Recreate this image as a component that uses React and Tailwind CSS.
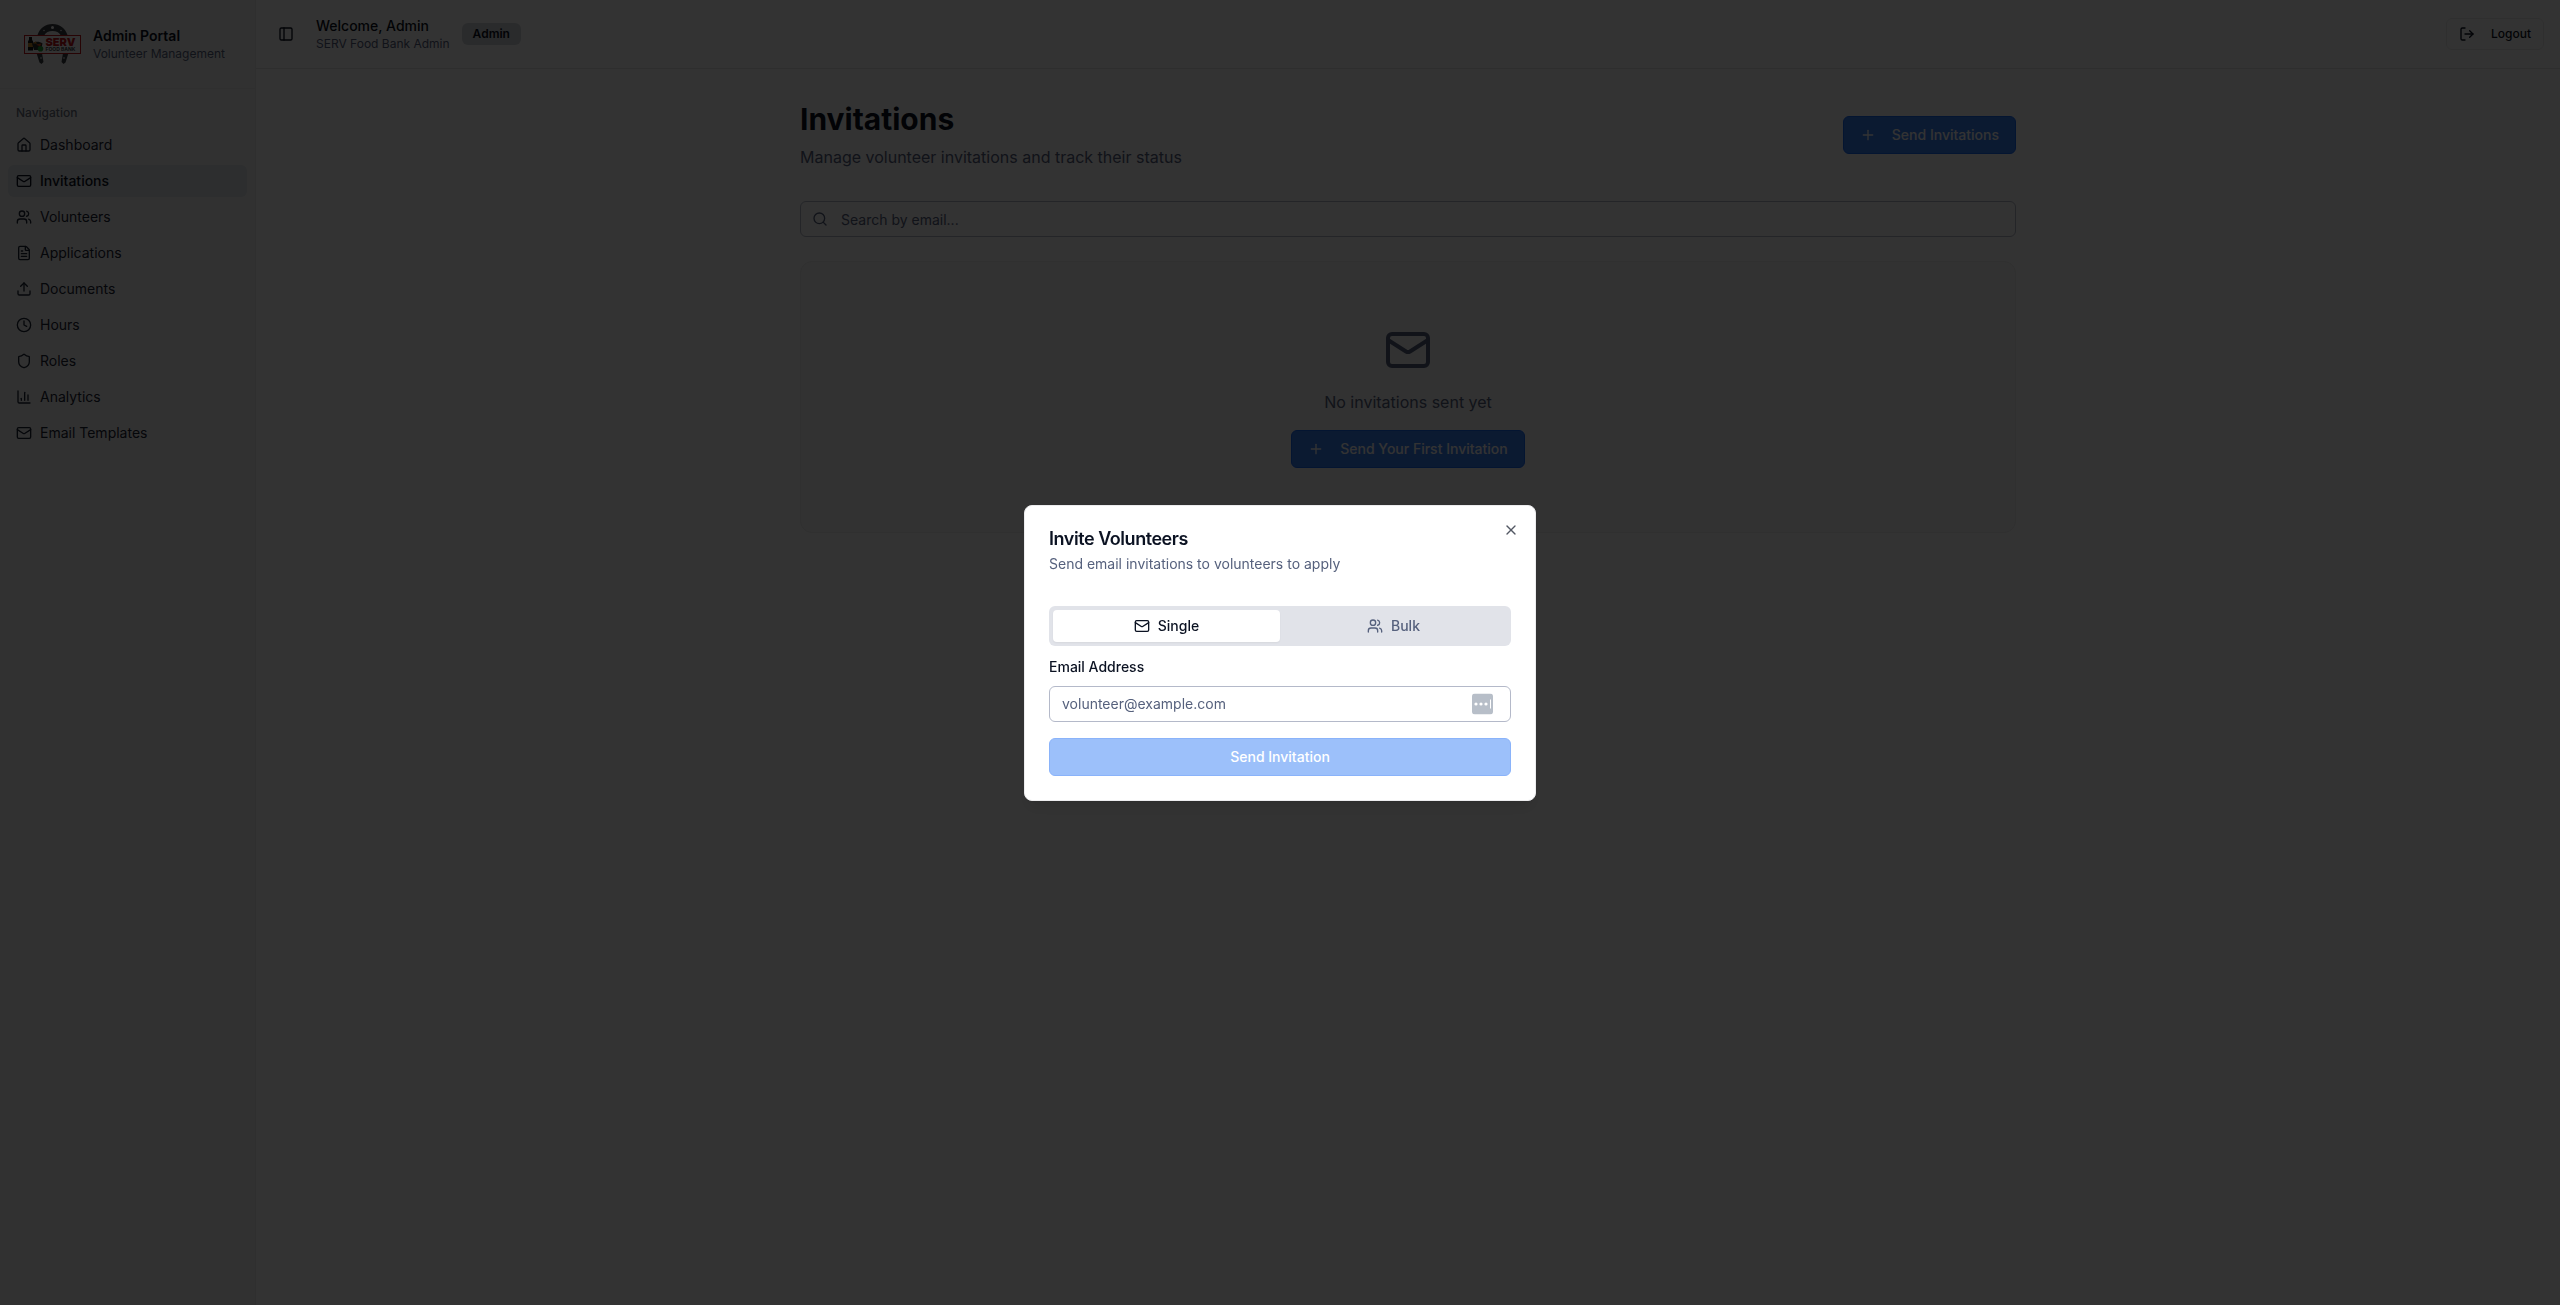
import React from "react";
import {
  BarChart3,
  Clock,
  FileText,
  Home,
  LogOut,
  Mail,
  PanelLeft,
  Plus,
  Search,
  Shield,
  Upload,
  Users,
  X,
} from "lucide-react";

const navItems = [
  { label: "Dashboard", icon: Home },
  { label: "Invitations", icon: Mail, active: true },
  { label: "Volunteers", icon: Users },
  { label: "Applications", icon: FileText },
  { label: "Documents", icon: Upload },
  { label: "Hours", icon: Clock },
  { label: "Roles", icon: Shield },
  { label: "Analytics", icon: BarChart3 },
  { label: "Email Templates", icon: Mail },
];

function Logo() {
  return (
    <svg className="h-10 w-[57px] shrink-0" viewBox="0 0 57 40" role="img" aria-label="SERV Food Bank">
      <path
        d="M13.5 11 C16 4 21 0 28.5 0 C36 0 41 4 43.5 11 L36.5 11 C35 8.5 32.5 7 28.5 7 C24.5 7 22 8.5 20.5 11 Z"
        fill="#3a3d42"
      />
      <path d="M12.5 29 L18 29 L19.5 38 L17.5 40 L15.5 38.5 Z" fill="#3a3d42" />
      <path d="M44.5 29 L39 29 L37.5 38 L39.5 40 L41.5 38.5 Z" fill="#3a3d42" />
      <g fill="#ffffff">
        <circle cx="28.5" cy="3.5" r="1.5" />
        <circle cx="20" cy="6.5" r="0.7" />
        <circle cx="37" cy="6.5" r="0.7" />
        <circle cx="17" cy="34" r="0.8" />
        <circle cx="40" cy="34" r="0.8" />
      </g>
      <rect x="0.5" y="11.5" width="56" height="18" fill="#fafafa" stroke="#c4161c" />
      <path d="M5 13 H8 V15.5 L9 17.5 V26.5 H4 V17.5 L5 15.5 Z" fill="#151515" />
      <rect x="4" y="19" width="5" height="4" fill="#c98a2b" />
      <path d="M8 19.5 C10 17 16 17 18.5 19.5 L17 26 H10 Z" fill="#2c2f2c" />
      <path d="M9 19.5 L11.5 17.5 L13 19.5 Z" fill="#e08a1e" />
      <path d="M12 20.5 L17.5 19.5 L16 22.5 Z" fill="#c9461e" />
      <circle cx="16.5" cy="24.8" r="2.8" fill="#1f9d35" />
      <text x="21.5" y="21.5" fill="#c4161c" fontFamily="Inter, sans-serif" fontWeight="900" fontSize="11">
        SERV
      </text>
      <text x="21.5" y="27" fill="#3a3d42" fontFamily="Inter, sans-serif" fontWeight="700" fontSize="5">
        FOOD BANK
      </text>
    </svg>
  );
}

function Sidebar() {
  return (
    <aside className="flex w-64 shrink-0 flex-col border-r border-[#ebebeb] bg-[#f6f6f6]">
      <div className="flex items-center gap-3 border-b border-[#ebebeb] p-6">
        <Logo />
        <div>
          <p className="text-sm font-semibold text-[#0b1222]">Admin Portal</p>
          <p className="text-xs text-[#56617d]">Volunteer Management</p>
        </div>
      </div>
      <nav className="p-2" aria-label="Navigation">
        <p className="flex h-8 items-center px-2 text-xs font-medium text-[#6a7080]">Navigation</p>
        <ul className="flex flex-col gap-1">
          {navItems.map(({ label, icon: Icon, active }) => (
            <li key={label}>
              <a
                href="#"
                aria-current={active ? "page" : undefined}
                className={
                  active
                    ? "flex h-8 items-center gap-2 rounded-md bg-[#dfe3e8] px-2 text-sm font-medium text-[#0b1222]"
                    : "flex h-8 items-center gap-2 rounded-md px-2 text-sm text-[#1b2333]"
                }
              >
                <Icon className="size-4 shrink-0" />
                {label}
              </a>
            </li>
          ))}
        </ul>
      </nav>
    </aside>
  );
}

function TopBar() {
  return (
    <header className="flex items-center justify-between border-b border-[#e4e4e4] p-4">
      <div className="flex items-center gap-4">
        <button type="button" aria-label="Toggle sidebar" className="flex size-7 items-center justify-center text-[#0b1222]">
          <PanelLeft className="size-4" />
        </button>
        <div className="flex items-center gap-3">
          <div>
            <p className="text-sm font-medium text-[#0b1222]">Welcome, Admin</p>
            <p className="text-xs text-[#56617d]">SERV Food Bank Admin</p>
          </div>
          <span className="rounded-md border border-transparent bg-[#d3d6db] px-2.5 py-0.5 text-xs font-semibold text-[#0b1222]">
            Admin
          </span>
        </div>
      </div>
      <button
        type="button"
        className="flex h-8 items-center gap-4 rounded-md border border-[#ebebeb] px-3 text-xs font-medium text-[#0b1222]"
      >
        <LogOut className="size-4" />
        Logout
      </button>
    </header>
  );
}

function AddButton({ children }) {
  return (
    <button
      type="button"
      className="flex items-center gap-4 rounded-md border border-[#1668f5] bg-[#3b82f6] px-4 py-2 text-sm font-medium text-white"
    >
      <Plus className="size-4" />
      {children}
    </button>
  );
}

function InvitationsPage() {
  return (
    <main className="mx-auto w-full max-w-7xl p-8">
      <div className="mb-8 flex items-center justify-between">
        <div>
          <h1 className="text-3xl font-bold text-[#0b1222]">Invitations</h1>
          <p className="mt-2 text-base text-[#56617d]">Manage volunteer invitations and track their status</p>
        </div>
        <AddButton>Send Invitations</AddButton>
      </div>
      <div className="relative mb-6">
        <Search className="absolute top-1/2 left-3 size-4 -translate-y-1/2 text-[#56617d]" />
        <input
          type="search"
          aria-label="Search by email"
          placeholder="Search by email..."
          className="block h-9 w-full rounded-md border border-[#b4b9c9] bg-white pr-3 pl-10 text-sm placeholder:text-[#56617d]"
        />
      </div>
      <section className="flex flex-col items-center gap-4 rounded-xl border border-[#ededed] bg-[#fafafa] py-16">
        <Mail className="size-12 text-[#56617d]" />
        <p className="text-base text-[#56617d]">No invitations sent yet</p>
        <AddButton>Send Your First Invitation</AddButton>
      </section>
    </main>
  );
}

function AutofillBadge() {
  return (
    <svg className="absolute top-1/2 right-[18px] size-[21px] -translate-y-1/2" viewBox="0 0 21 21" aria-hidden="true">
      <rect width="21" height="21" rx="3" fill="#b7bec8" />
      <g fill="#ffffff">
        <circle cx="4" cy="10.5" r="1.6" />
        <circle cx="9" cy="10.5" r="1.6" />
        <circle cx="14" cy="10.5" r="1.6" />
        <rect x="18" y="6" width="1" height="9" />
      </g>
    </svg>
  );
}

function InviteDialog() {
  return (
    <div
      role="dialog"
      aria-modal="true"
      aria-labelledby="invite-title"
      aria-describedby="invite-description"
      className="relative flex w-full max-w-lg flex-col gap-4 rounded-lg border border-[#ececee] bg-white p-6 shadow-lg"
    >
      <div className="flex flex-col gap-1.5">
        <h2 id="invite-title" className="text-lg leading-none font-semibold tracking-tight text-[#0b1222]">
          Invite Volunteers
        </h2>
        <p id="invite-description" className="text-sm text-[#56617d]">
          Send email invitations to volunteers to apply
        </p>
      </div>
      <div className="mt-4">
        <div role="tablist" className="grid h-10 grid-cols-2 rounded-md bg-[#e1e3e9] p-1 text-sm font-medium">
          <button
            type="button"
            role="tab"
            aria-selected="true"
            className="flex items-center justify-center gap-2 rounded-sm bg-white text-[#0b1222] shadow-xs"
          >
            <Mail className="size-4" />
            Single
          </button>
          <button
            type="button"
            role="tab"
            aria-selected="false"
            className="flex items-center justify-center gap-2 rounded-sm text-[#56617d]"
          >
            <Users className="size-4" />
            Bulk
          </button>
        </div>
        <form className="mt-2 flex flex-col gap-4">
          <div>
            <div className="mb-2">
              <label htmlFor="invite-email" className="text-sm font-medium text-[#0b1222]">
                Email Address
              </label>
            </div>
            <div className="relative">
              <input
                id="invite-email"
                type="email"
                placeholder="volunteer@example.com"
                className="block h-9 w-full rounded-md border border-[#b4b9c9] bg-white px-3 text-sm placeholder:text-[#56617d]"
              />
              <AutofillBadge />
            </div>
          </div>
          <button
            type="submit"
            disabled
            className="rounded-md border border-[#1668f5] bg-[#3b82f6] px-4 py-2 text-sm font-medium text-white opacity-50"
          >
            Send Invitation
          </button>
        </form>
      </div>
      <button type="button" aria-label="Close" className="absolute top-4 right-4 text-[#0b1222] opacity-70">
        <X className="size-4" />
      </button>
    </div>
  );
}

export default function App() {
  return (
    <div className="flex min-h-screen bg-white font-['Inter',sans-serif]">
      <Sidebar />
      <div className="flex min-w-0 flex-1 flex-col">
        <TopBar />
        <InvitationsPage />
      </div>
      <div className="fixed inset-0 flex items-center justify-center bg-black/80">
        <InviteDialog />
      </div>
    </div>
  );
}
